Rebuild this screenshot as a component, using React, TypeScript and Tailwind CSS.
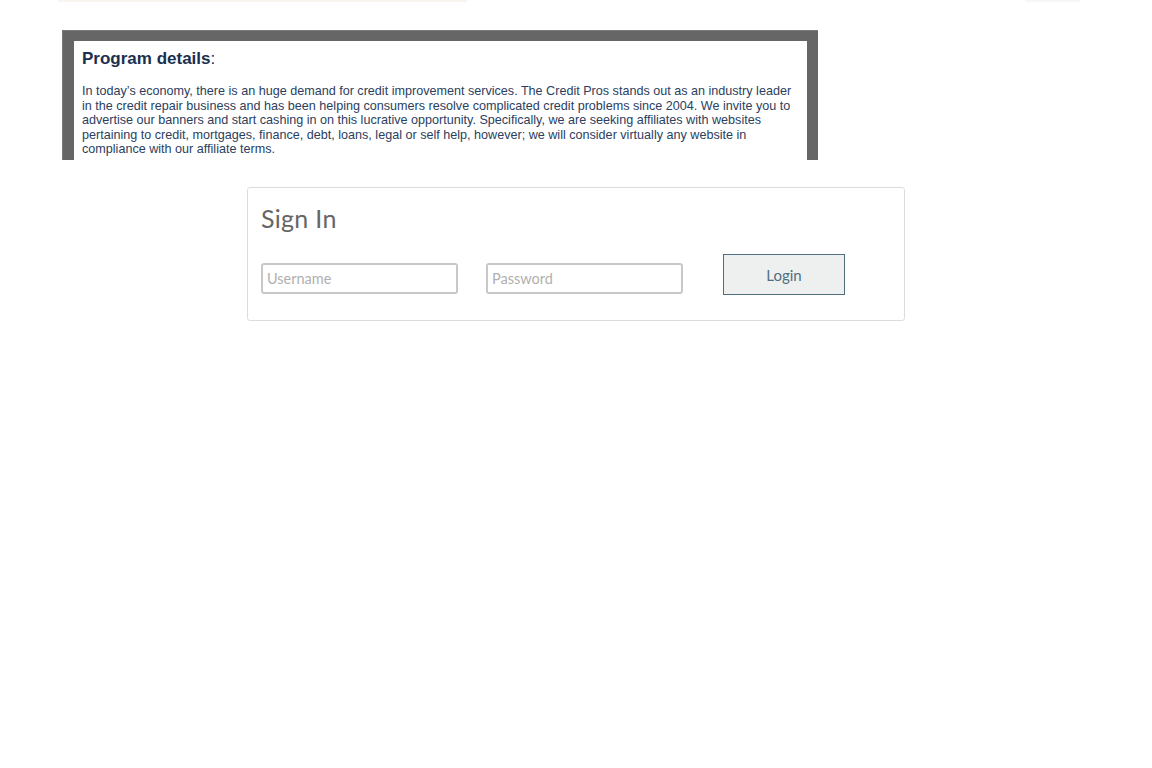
import React from "react";

export default function App() {
  const lines = [
    "In today\u2019s economy, there is an huge demand for credit improvement services. The Credit Pros stands out as an industry leader",
    "in the credit repair business and has been helping consumers resolve complicated credit problems since 2004. We invite you to",
    "advertise our banners and start cashing in on this lucrative opportunity. Specifically, we are seeking affiliates with websites",
    "pertaining to credit, mortgages, finance, debt, loans, legal or self help, however; we will consider virtually any website in",
    "compliance with our affiliate terms.",
  ];
  return (
    <div className="w-[1152px] h-[768px] bg-white relative overflow-hidden">
      <div className="flex h-[3px]">
        <div className="ml-[58px] w-[409px] h-[2px] bg-[#f7f5ee]" />
        <div className="ml-[558px] w-[55px] h-[2px] bg-[#f6f6f6]" />
      </div>
      <div className="ml-[62px] mt-[27px] w-[756px] h-[130px] bg-[#666666] pt-[10px] pl-[11px] pr-[11px] border-t border-l border-[#7a7a7a]">
        <div className="bg-white h-full pl-[8px] pt-[8px] font-['Liberation_Sans',Arial,sans-serif]">
          <div className="text-[17px] leading-[20px] text-[#1b2f4f]">
            <span className="font-bold">Program details</span>:
          </div>
          <div className="mt-[15px] text-[12.6px] leading-[14.5px] text-[#2b405e]">
            {lines.map((l, i) => (
              <div key={i} className="whitespace-nowrap">{l}</div>
            ))}
          </div>
        </div>
      </div>
      <div className="ml-[247px] mt-[27px] w-[658px] h-[134px] border border-[#dcdcdc] rounded-[3px] px-[13px] pt-[15px] font-['Lato','Inter',sans-serif]">
        <div className="text-[25px] leading-[30px] text-[#666666] tracking-[0.3px]">Sign In</div>
        <div className="flex items-start mt-[21px]">
          <input
            placeholder="Username"
            className="mt-[9px] w-[197px] h-[31px] border-2 border-[#c8c8c8] rounded-[3px] px-[4px] text-[14.5px] text-[#666] placeholder:text-[#b0b0b0] outline-none"
          />
          <input
            type="password"
            placeholder="Password"
            className="mt-[9px] ml-[28px] w-[197px] h-[31px] border-2 border-[#c8c8c8] rounded-[3px] px-[4px] text-[14.5px] text-[#666] placeholder:text-[#b0b0b0] outline-none"
          />
          <button className="ml-[40px] w-[122px] h-[41px] pt-[2px] bg-[#eef0f0] border border-[#4f6e80] text-[15px] text-[#4f6e80]">
            Login
          </button>
        </div>
      </div>
    </div>
  );
}
